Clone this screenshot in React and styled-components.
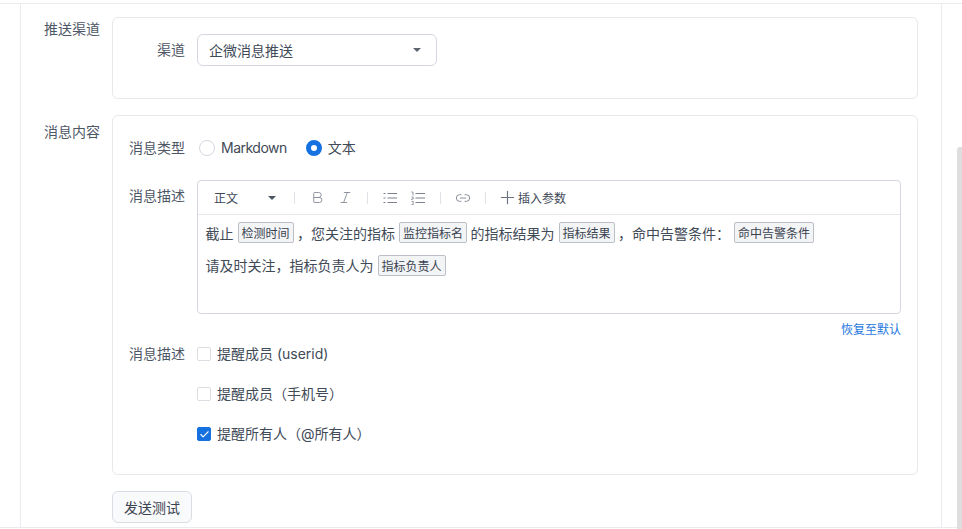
import React from 'react';
import styled, { createGlobalStyle } from 'styled-components';
import { Plus, Bold, Italic, Link2, Check } from 'lucide-react';

const GlobalStyle = createGlobalStyle`
    html, body {
        margin: 0;
        padding: 0;
        height: 529px;
        overflow: hidden;
        background: #fff;
    }
    body {
        font-family: Inter, "Noto Sans CJK SC", sans-serif;
        font-size: 14px;
        color: #3d4757;
    }
`;

const Page = styled.div`
    position: relative;
    height: 529px;
    padding-top: 3px;
    box-sizing: border-box;
`;

const Frame = styled.div`
    height: 525px;
    box-sizing: border-box;
    border-top: 1px solid #e9ebef;
    border-bottom: 1px solid #e9ebef;
`;

const Sheet = styled.div`
    width: 922px;
    height: 100%;
    margin-left: 20px;
    box-sizing: border-box;
    border-left: 1px solid #e9ebef;
    border-right: 1px solid #e9ebef;
    padding: 13px 23px 0 23px;
`;

const Thumb = styled.div`
    position: absolute;
    right: 0;
    top: 147px;
    width: 5px;
    height: 382px;
    background: #dedede;
    border-radius: 3px 0 0 0;
`;

const Section = styled.div`
    display: flex;
    margin-bottom: 16px;
`;

const SectionLabel = styled.div`
    width: 68px;
    flex: none;
    padding-top: ${(p) => p.$top}px;
    line-height: 22px;
    color: #4e5766;
`;

const Card = styled.div`
    width: 806px;
    height: ${(p) => p.$height}px;
    box-sizing: border-box;
    border: 1px solid #e6e8ec;
    border-radius: 6px;
    padding: ${(p) => p.$pad};
`;

const Row = styled.div`
    display: flex;
    align-items: ${(p) => p.$align || 'center'};
    margin-top: ${(p) => p.$top || 0}px;
`;

const FieldLabel = styled.div`
    width: 56px;
    margin-right: 12px;
    margin-top: ${(p) => p.$top || 0}px;
    flex: none;
    text-align: right;
    line-height: 22px;
    color: #4e5766;
`;

const Select = styled.div`
    width: 240px;
    height: 32px;
    box-sizing: border-box;
    display: flex;
    align-items: center;
    justify-content: space-between;
    padding: 0 15px 0 11px;
    border: 1px solid #d4d7e0;
    border-radius: 6px;
    color: #414a57;
`;

const Caret = styled.span`
    width: 0;
    height: 0;
    border-left: 4px solid transparent;
    border-right: 4px solid transparent;
    border-top: 4px solid ${(p) => p.$color || '#5c6470'};
`;

const Radios = styled.div`
    display: flex;
    align-items: center;
    gap: 19px;
    margin-left: 2px;
`;

const Choice = styled.label`
    display: flex;
    align-items: center;
    gap: 6px;
    line-height: 22px;
    color: #414a57;
`;

const Latin = styled.span`
    letter-spacing: -0.5px;
`;

const Radio = styled.span`
    width: 16px;
    height: 16px;
    box-sizing: border-box;
    border-radius: 50%;
    background: #fff;
    border: ${(p) => (p.$on ? '5px solid #1570e0' : '1px solid #d4d7e0')};
`;

const Editor = styled.div`
    width: 704px;
    height: 134px;
    box-sizing: border-box;
    border: 1px solid #d4d7e0;
    border-radius: 4px;
`;

const Toolbar = styled.div`
    height: 34px;
    box-sizing: border-box;
    display: flex;
    align-items: center;
    border-bottom: 1px solid #e6e8ec;
    padding-left: 16px;
    font-size: 12px;
    color: #3d4757;
`;

const Heading = styled.div`
    width: 62px;
    display: flex;
    align-items: center;
    justify-content: space-between;
    margin-right: 18px;
`;

const Divider = styled.span`
    width: 1px;
    height: 12px;
    background: #e0e2e7;
    margin-right: ${(p) => p.$gap}px;
`;

const ToolIcon = styled.span`
    display: flex;
    color: #7a808c;
    margin-right: ${(p) => p.$gap}px;
`;

const Insert = styled.span`
    display: flex;
    align-items: center;
    color: #3d4757;

    svg {
        color: #6a7280;
    }
`;

const Body = styled.div`
    padding: 4px 7.5px;
    color: #414a57;
`;

const Line = styled.div`
    height: 27px;
    margin-bottom: 5.5px;
    display: flex;
    align-items: center;
    white-space: pre;
`;

const Tag = styled.span`
    height: 21px;
    box-sizing: border-box;
    display: inline-flex;
    align-items: center;
    padding: 0 3px;
    margin: 0 3.5px 0 4px;
    background: #f3f4f6;
    border: 1px solid #bcbfc6;
    border-radius: 2px;
    font-size: 12px;
    color: #3a4350;
`;

const Restore = styled.div`
    width: 704px;
    margin-left: 68px;
    margin-top: 7px;
    text-align: right;
    font-size: 12px;
    line-height: 17px;
    color: #1f78df;
`;

const Checks = styled.div`
    display: flex;
    flex-direction: column;
    gap: 18px;
`;

const Box = styled.span`
    width: 14px;
    height: 14px;
    box-sizing: border-box;
    display: flex;
    align-items: center;
    justify-content: center;
    border-radius: 2px;
    color: #fff;
    background: ${(p) => (p.$on ? '#1570e0' : '#fff')};
    border: 1px solid ${(p) => (p.$on ? '#1570e0' : '#dcdee4')};
`;

const Button = styled.button`
    display: block;
    width: 80px;
    height: 32px;
    margin-left: 68px;
    padding: 0;
    font: inherit;
    color: #3a4350;
    background: #f9fafb;
    border: 1px solid #d9dce2;
    border-radius: 6px;
`;

function BulletIcon() {
    return (
        <svg width="14" height="14" viewBox="0 0 14 14" fill="none" stroke="currentColor" strokeWidth="1">
            <path d="M4.5 2.5H14M4.5 7H14M4.5 11.5H14" />
            <path d="M0.5 2.5H2.5M0.5 7H2.5M0.5 11.5H2.5" />
        </svg>
    );
}

function OrderedIcon() {
    return (
        <svg width="14" height="14" viewBox="0 0 14 14" fill="none" stroke="currentColor" strokeWidth="1">
            <path d="M4.5 2.5H14M4.5 7H14M4.5 11.5H14" />
            <path d="M0.5 1H2V4.5M0.5 6H2.2V8H0.7V9M0.5 10.5H2.2V13.5H0.5" strokeWidth="0.8" />
        </svg>
    );
}

function App() {
    return (
        <Page>
            <GlobalStyle />
            <Frame>
                <Sheet>
                    <Section>
                        <SectionLabel $top={1}>推送渠道</SectionLabel>
                        <Card $height={82} $pad="16px 0 0 16px">
                            <Row>
                                <FieldLabel>渠道</FieldLabel>
                                <Select>
                                    企微消息推送
                                    <Caret />
                                </Select>
                            </Row>
                        </Card>
                    </Section>
                    <Section>
                        <SectionLabel $top={6}>消息内容</SectionLabel>
                        <Card $height={360} $pad="21px 0 0 16px">
                            <Row>
                                <FieldLabel>消息类型</FieldLabel>
                                <Radios>
                                    <Choice><Radio /><Latin>Markdown</Latin></Choice>
                                    <Choice><Radio $on />文本</Choice>
                                </Radios>
                            </Row>
                            <Row $align="flex-start" $top={21}>
                                <FieldLabel $top={5}>消息描述</FieldLabel>
                                <Editor>
                                    <Toolbar>
                                        <Heading>正文<Caret $color="#4a5462" /></Heading>
                                        <Divider $gap={15} />
                                        <ToolIcon $gap={13}><Bold size={15} strokeWidth={1.3} /></ToolIcon>
                                        <ToolIcon $gap={14}><Italic size={15} strokeWidth={1.3} /></ToolIcon>
                                        <Divider $gap={15} />
                                        <ToolIcon $gap={14}><BulletIcon /></ToolIcon>
                                        <ToolIcon $gap={15}><OrderedIcon /></ToolIcon>
                                        <Divider $gap={14} />
                                        <ToolIcon $gap={14}><Link2 size={16} strokeWidth={1.3} /></ToolIcon>
                                        <Divider $gap={11} />
                                        <Insert><Plus size={21} strokeWidth={1.3} />插入参数</Insert>
                                    </Toolbar>
                                    <Body>
                                        <Line>截止<Tag>检测时间</Tag>，您关注的指标<Tag>监控指标名</Tag>的指标结果为<Tag>指标结果</Tag>，命中告警条件：<Tag>命中告警条件</Tag></Line>
                                        <Line>请及时关注，指标负责人为<Tag>指标负责人</Tag></Line>
                                    </Body>
                                </Editor>
                            </Row>
                            <Restore>恢复至默认</Restore>
                            <Row $align="flex-start" $top={5}>
                                <FieldLabel>消息描述</FieldLabel>
                                <Checks>
                                    <Choice><Box /><span>提醒成员 (userid)</span></Choice>
                                    <Choice><Box />提醒成员（手机号）</Choice>
                                    <Choice><Box $on><Check size={11} strokeWidth={2.4} /></Box>提醒所有人（@所有人）</Choice>
                                </Checks>
                            </Row>
                        </Card>
                    </Section>
                    <Button>发送测试</Button>
                </Sheet>
            </Frame>
            <Thumb />
        </Page>
    );
}

export default App;
